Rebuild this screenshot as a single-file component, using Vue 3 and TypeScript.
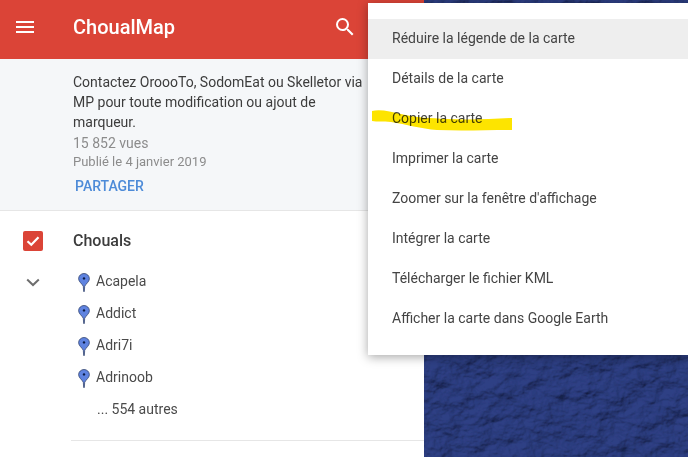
<template>
  <div id="page">
    <aside class="panel">
      <header class="topbar">
        <svg class="burger" width="24" height="24" viewBox="0 0 24 24">
          <path d="M3 18h18v-2H3v2zm0-5h18v-2H3v2zm0-7v2h18V6H3z" fill="#fff" />
        </svg>
        <h1>ChoualMap</h1>
        <svg class="search" width="24" height="24" viewBox="0 0 24 24">
          <path
            d="M15.5 14h-.79l-.28-.27A6.47 6.47 0 0 0 16 9.5 6.5 6.5 0 1 0 9.5 16c1.61 0 3.09-.59 4.23-1.57l.27.28v.79l5 4.99L20.49 19l-4.99-5zm-6 0C7.01 14 5 11.99 5 9.5S7.01 5 9.5 5 14 7.01 14 9.5 11.99 14 9.5 14z"
            fill="#fff"
          />
        </svg>
      </header>

      <section class="about">
        <p class="desc">
          Contactez OroooTo, SodomEat ou Skelletor via MP pour toute modification ou ajout de marqueur.
        </p>
        <p class="views">15 852 vues</p>
        <p class="date">Publié le 4 janvier 2019</p>
        <a class="share">PARTAGER</a>
      </section>

      <section class="layer">
        <div class="controls">
          <span class="check">
            <svg width="20" height="20" viewBox="0 0 20 20">
              <path d="M4.5 10.2l3.8 3.6 7.2-7.6" fill="none" stroke="#fff" stroke-width="2.2" />
            </svg>
          </span>
          <svg class="chevron" width="14" height="9" viewBox="0 0 14 9">
            <path d="M1.2 1.5L7 7l5.8-5.5" fill="none" stroke="#6e6e6e" stroke-width="2" />
          </svg>
        </div>
        <div class="content">
          <h2>Chouals</h2>
          <ul>
            <li v-for="name in markers" :key="name">
              <svg class="pin" width="12" height="19" viewBox="0 0 12 19">
                <path
                  d="M6 .5C3 .5.6 2.8.6 5.7c0 2.8 3.2 4.8 4.7 7.6L5.7 18.6h.6l.4-5.3c1.5-2.8 4.7-4.8 4.7-7.6C11.4 2.8 9 .5 6 .5z"
                  fill="#5f83e0"
                  stroke="#2a3a60"
                  stroke-width=".7"
                />
                <circle cx="6" cy="5.4" r="1.2" fill="#0b1a45" />
              </svg>
              {{ name }}
            </li>
            <li class="more">... 554 autres</li>
          </ul>
        </div>
      </section>
    </aside>

    <div class="map">
      <svg width="100%" height="100%">
        <filter id="relief" x="0" y="0" width="100%" height="100%">
          <feTurbulence type="fractalNoise" baseFrequency="0.045 0.06" numOctaves="6" seed="11" result="noise" />
          <feDiffuseLighting in="noise" surfaceScale="5" lighting-color="#2d4185" result="light">
            <feDistantLight azimuth="235" elevation="58" />
          </feDiffuseLighting>
        </filter>
        <rect width="100%" height="100%" filter="url(#relief)" />
      </svg>
    </div>

    <nav class="menu">
      <a v-for="(item, i) in menuItems" :key="item" :class="{ hover: i === 0 }">{{ item }}</a>
      <svg class="marker" width="146" height="26" viewBox="0 0 146 26">
        <path
          d="M1 4C10 2 20 5 30 7c15 4 30 4 45 5 25 1 45 0 66-1v12c-26 0-51 1-75 0C50 22 35 17 20 15 12 14 6 15 1 14z"
          fill="#fde400"
        />
      </svg>
    </nav>
  </div>
</template>

<script setup lang="ts">
const markers = ["Acapela", "Addict", "Adri7i", "Adrinoob"];

const menuItems = [
  "Réduire la légende de la carte",
  "Détails de la carte",
  "Copier la carte",
  "Imprimer la carte",
  "Zoomer sur la fenêtre d'affichage",
  "Intégrer la carte",
  "Télécharger le fichier KML",
  "Afficher la carte dans Google Earth",
];
</script>

<style>
body {
  overflow: hidden;
}
</style>

<style scoped>
#page {
  position: relative;
  display: flex;
  width: 688px;
  height: 457px;
  overflow: hidden;
  background: #fff;
  font-family: Roboto, "Liberation Sans", sans-serif;
  color: #3c3c3c;
}

.panel {
  width: 424px;
  flex: none;
}

.topbar {
  display: flex;
  align-items: center;
  height: 59px;
  padding: 0 0 6px 13px;
  box-sizing: border-box;
  background: #db4437;
  color: #fff;
}
.topbar h1 {
  margin: 0 0 0 36px;
  font-size: 20px;
  font-weight: 500;
}
.search {
  margin-left: 158px;
}

.about {
  height: 152px;
  padding: 13px 0 0 73px;
  box-sizing: border-box;
  background: #f5f7f9;
  border-bottom: 1px solid #e6e6e6;
}
.about p {
  margin: 0;
}
.desc {
  width: 296px;
  font-size: 14px;
  line-height: 20px;
}
.views {
  font-size: 14px;
  line-height: 22px;
  color: #8c8c8c;
}
.date {
  font-size: 13px;
  line-height: 15px;
  color: #8c8c8c;
}
.share {
  display: block;
  margin: 7px 0 0 2px;
  font-size: 14px;
  line-height: 20px;
  font-weight: 500;
  color: #4d8bd8;
}

.layer {
  display: flex;
  height: 230px;
}
.controls {
  display: flex;
  flex-direction: column;
  align-items: center;
  width: 66px;
  flex: none;
  padding-top: 20px;
}
.check {
  display: block;
  width: 20px;
  height: 20px;
  border-radius: 2px;
  background: #db4437;
}
.check svg {
  display: block;
}
.chevron {
  margin-top: 27px;
}
.content {
  flex: 1;
  margin-left: 5px;
  height: 230px;
  box-sizing: border-box;
  border-bottom: 1px solid #e6e6e6;
}
.content h2 {
  margin: 0;
  padding: 19px 0 0 2px;
  font-size: 16px;
  line-height: 22px;
  font-weight: 500;
}
.content ul {
  margin: 13px 0 0;
  padding: 0;
  list-style: none;
}
.content li {
  display: flex;
  align-items: center;
  height: 32px;
  padding-left: 7px;
  font-size: 14px;
  color: #4a4a4a;
}
.pin {
  margin: 2px 6px 0 0;
  flex: none;
}
.content li.more {
  padding-left: 26px;
}

.map {
  flex: 1;
  background: #2b4189;
}
.map svg {
  display: block;
}

.menu {
  position: absolute;
  top: 3px;
  left: 368px;
  right: 0;
  height: 352px;
  padding-top: 16px;
  box-sizing: border-box;
  background: #fff;
  box-shadow: 0 2px 10px rgba(0, 0, 0, 0.35);
}
.menu a {
  display: flex;
  align-items: center;
  height: 40px;
  padding: 0 0 2px 24px;
  box-sizing: border-box;
  font-size: 14px;
  color: #444;
}
.menu a.hover {
  background: #eeeeee;
}
.marker {
  position: absolute;
  top: 104px;
  left: 3px;
  mix-blend-mode: multiply;
}
</style>
